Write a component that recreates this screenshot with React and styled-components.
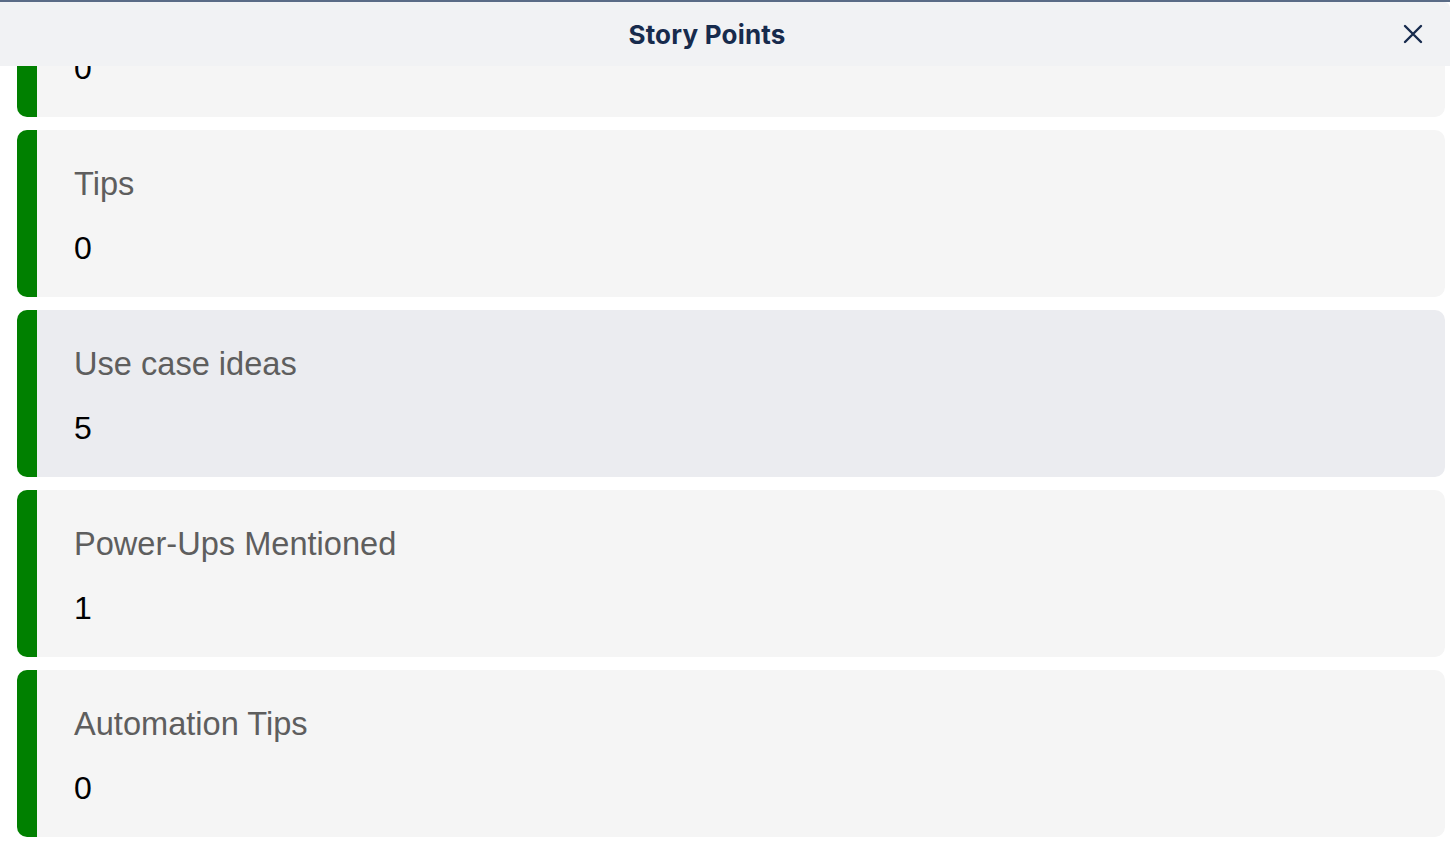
import React, { useEffect, useRef } from 'react';
import styled, { createGlobalStyle } from 'styled-components';

const GlobalStyle = createGlobalStyle`
  * {
    box-sizing: border-box;
  }

  html,
  body,
  #root {
    margin: 0;
    height: 100%;
  }

  body {
    background-color: #ffffff;
    font-family: "Liberation Sans", Arial, sans-serif;
    overflow: hidden;
  }
`;

const Panel = styled.div`
  display: flex;
  flex-direction: column;
  height: 100vh;
  border-top: 2px solid #5a6b86;
`;

const Header = styled.header`
  position: relative;
  display: flex;
  align-items: center;
  height: 64px;
  flex-shrink: 0;
  padding-right: 36px;
  background-color: #f1f2f4;
  border-top-right-radius: 6px;
`;

const Title = styled.h1`
  flex: 1;
  margin: 0;
  text-align: center;
  font-family: Inter, "Noto Sans", sans-serif;
  font-size: 26px;
  font-weight: 700;
  color: #172b4d;
  letter-spacing: 0.2px;
`;

const CloseButton = styled.button`
  position: absolute;
  right: 21px;
  top: 50%;
  transform: translateY(-50%);
  width: 32px;
  height: 32px;
  display: flex;
  align-items: center;
  justify-content: center;
  padding: 0;
  border: none;
  background: transparent;
  color: #172b4d;
  cursor: pointer;
`;

const Scroller = styled.div`
  flex: 1;
  overflow-y: auto;
  scrollbar-width: none;

  &::-webkit-scrollbar {
    display: none;
  }
`;

const List = styled.div`
  display: flex;
  flex-direction: column;
  gap: 13px;
  padding: 13px 5px 15px 17px;
`;

const Card = styled.div`
  height: 167px;
  padding: 36px 37px 0;
  background-color: ${(p) => (p.$active ? '#ebecf0' : '#f5f5f5')};
  border-left: 20px solid #008000;
  border-radius: 10px;
`;

const Label = styled.div`
  font-size: 32.6px;
  line-height: 36px;
  color: #5e5e5e;
  margin-bottom: 28px;
`;

const Value = styled.div`
  font-size: 32px;
  line-height: 36px;
  color: #000000;
`;

const points = [
  { id: 'questions', label: 'Questions', value: 0 },
  { id: 'tips', label: 'Tips', value: 0 },
  { id: 'use-cases', label: 'Use case ideas', value: 5, active: true },
  { id: 'power-ups', label: 'Power-Ups Mentioned', value: 1 },
  { id: 'automation', label: 'Automation Tips', value: 0 },
];

function CloseIcon() {
  return (
    <svg width="22" height="22" viewBox="0 0 22 22" fill="none">
      <path
        d="M3 3L19 19M19 3L3 19"
        stroke="currentColor"
        strokeWidth="2.4"
        strokeLinecap="round"
      />
    </svg>
  );
}

function App() {
  const scrollRef = useRef(null);

  useEffect(() => {
    const el = scrollRef.current;
    if (el) el.scrollTop = el.scrollHeight;
  }, []);

  return (
    <>
      <GlobalStyle />
      <Panel>
        <Header>
          <Title>Story Points</Title>
          <CloseButton aria-label="Close">
            <CloseIcon />
          </CloseButton>
        </Header>
        <Scroller ref={scrollRef}>
          <List>
            {points.map((point) => (
              <Card key={point.id} $active={point.active}>
                <Label>{point.label}</Label>
                <Value>{point.value}</Value>
              </Card>
            ))}
          </List>
        </Scroller>
      </Panel>
    </>
  );
}

export default App;
